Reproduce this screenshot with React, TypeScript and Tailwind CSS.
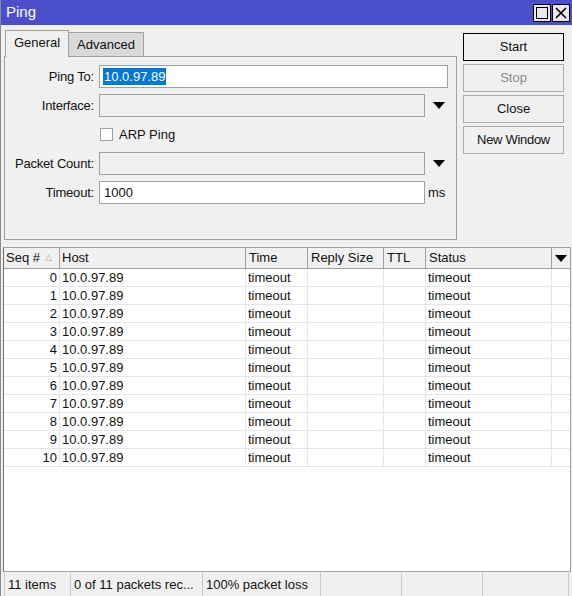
import React from "react";

const cols = "grid grid-cols-[56px_186px_62px_76px_42px_126px_1fr]";

const rows = Array.from({ length: 11 }, (_, i) => i);

function Field({
  label,
  children,
}: {
  label: string;
  children: React.ReactNode;
}) {
  return (
    <div className="flex items-center h-[23px]">
      <div className="w-[90px] text-right pr-[1px] tracking-[-0.2px]">{label}</div>
      <div className="ml-[4px] flex items-center">{children}</div>
    </div>
  );
}

function Triangle() {
  return (
    <svg width="12" height="7" viewBox="0 0 12 7" className="ml-[8px]">
      <path d="M0 0 H12 L6 7 Z" fill="#000" />
    </svg>
  );
}

export default function App() {
  return (
    <div
      className="w-[572px] h-[596px] bg-[#f0f0f0] flex flex-col text-[13px] text-[#111] border-l border-[#8a8a8a] overflow-hidden"
      style={{ fontFamily: '"Liberation Sans", Arial, sans-serif' }}
    >
      {/* title bar */}
      <div className="h-[25px] bg-[#4b4fcc] flex items-center justify-between pl-[5px] pr-[2px] shrink-0">
        <span className="text-white text-[15px]">Ping</span>
        <div className="flex gap-[1px]">
          <div className="w-[18px] h-[18px] bg-[#e8e8e8] border border-black flex items-center justify-center">
            <div className="w-[12px] h-[12px] border border-black" />
          </div>
          <div className="w-[18px] h-[18px] bg-[#e8e8e8] border border-black flex items-center justify-center">
            <svg width="12" height="12" viewBox="0 0 12 12">
              <path d="M1 1 L11 11 M11 1 L1 11" stroke="#000" strokeWidth="1.6" />
            </svg>
          </div>
        </div>
      </div>

      {/* top area */}
      <div className="flex pl-[3px] pt-[5px] h-[222px] shrink-0">
        <div className="w-[453px] flex flex-col">
          {/* tabs */}
          <div className="flex items-end h-[26px] pl-[1px]">
            <div className="h-[27px] w-[64px] border border-b-0 border-[#a0a0a0] bg-[#f0f0f0] flex items-center justify-center relative top-[1px] z-10 pb-[2px]">
              General
            </div>
            <div className="h-[24px] w-[75px] border border-l-0 border-b-0 border-[#a0a0a0] bg-[#d9d9d9] flex items-center justify-center">
              Advanced
            </div>
          </div>
          {/* panel */}
          <div className="h-[184px] border border-[#a0a0a0] pt-[8px] flex flex-col gap-[6px]">
            <Field label="Ping To:">
              <div className="w-[349px] h-[23px] bg-white border border-[#a0a0a0] flex items-center pl-[3px]">
                <span className="bg-[#0078d7] text-white px-[1px] leading-[17px]">10.0.97.89</span>
              </div>
            </Field>
            <Field label="Interface:">
              <div className="w-[326px] h-[23px] bg-[#f0f0f0] border border-[#a0a0a0]" />
              <Triangle />
            </Field>
            <div className="flex items-center h-[23px] pl-[95px]">
              <div className="w-[13px] h-[13px] bg-white border border-[#a0a0a0]" />
              <span className="ml-[6px]">ARP Ping</span>
            </div>
            <Field label="Packet Count:">
              <div className="w-[326px] h-[23px] bg-[#f0f0f0] border border-[#a0a0a0]" />
              <Triangle />
            </Field>
            <Field label="Timeout:">
              <div className="w-[326px] h-[23px] bg-white border border-[#a0a0a0] flex items-center pl-[4px]">
                1000
              </div>
              <span className="ml-[3px]">ms</span>
            </Field>
          </div>
        </div>

        {/* buttons */}
        <div className="ml-[6px] pt-[3px] flex flex-col gap-[3px]">
          <button className="w-[101px] h-[28px] border border-black bg-[#f0f0f0]">Start</button>
          <button className="w-[101px] h-[28px] border border-[#adadad] bg-[#f0f0f0] text-[#8c8c8c]">Stop</button>
          <button className="w-[101px] h-[28px] border border-[#adadad] bg-[#f0f0f0]">Close</button>
          <button className="w-[101px] h-[28px] border border-[#adadad] bg-[#f0f0f0] tracking-[-0.3px]">New Window</button>
        </div>
      </div>

      {/* table */}
      <div className="mx-[2px] mr-[1px] h-[325px] border border-[#a0a0a0] border-l-[#6e6e6e] bg-white flex flex-col shrink-0">
        <div className={`${cols} h-[21px] bg-[#f0f0f0] border-b border-[#a0a0a0]`}>
          <div className="border-r border-[#a0a0a0] pl-[2px] flex items-center">
            Seq #<span className="text-[#b0b0b0] text-[9px] ml-[5px]">△</span>
          </div>
          <div className="border-r border-[#a0a0a0] pl-[2px] flex items-center">Host</div>
          <div className="border-r border-[#a0a0a0] pl-[3px] flex items-center">Time</div>
          <div className="border-r border-[#a0a0a0] pl-[3px] flex items-center">Reply Size</div>
          <div className="border-r border-[#a0a0a0] pl-[3px] flex items-center">TTL</div>
          <div className="border-r border-[#a0a0a0] pl-[3px] flex items-center">Status</div>
          <div className="flex items-center justify-center">
            <svg width="12" height="7" viewBox="0 0 12 7">
              <path d="M0 0 H12 L6 7 Z" fill="#000" />
            </svg>
          </div>
        </div>
        {rows.map((i) => (
          <div key={i} className={`${cols} h-[18px] border-b border-[#e6e6e6] leading-[17px]`}>
            <div className="border-r border-[#e6e6e6] text-right pr-[2px]">{i}</div>
            <div className="border-r border-[#e6e6e6] pl-[2px]">10.0.97.89</div>
            <div className="border-r border-[#e6e6e6] pl-[2px]">timeout</div>
            <div className="border-r border-[#e6e6e6]" />
            <div className="border-r border-[#e6e6e6]" />
            <div className="border-r border-[#e6e6e6] pl-[2px]">timeout</div>
            <div />
          </div>
        ))}
      </div>

      {/* status bar */}
      <div className="flex h-[24px] pl-[3px] pt-[1px]">
        <div className="w-[67px] border-l border-r border-[#c8c8c8] pl-[3px] flex items-center">11 items</div>
        <div className="w-[132px] border-r border-[#c8c8c8] pl-[3px] flex items-center">0 of 11 packets rec...</div>
        <div className="w-[118px] border-r border-[#c8c8c8] pl-[3px] flex items-center">100% packet loss</div>
        <div className="w-[81px] border-r border-[#c8c8c8]" />
        <div className="w-[81px] border-r border-[#c8c8c8]" />
        <div className="w-[86px] border-r border-[#c8c8c8]" />
      </div>
    </div>
  );
}
